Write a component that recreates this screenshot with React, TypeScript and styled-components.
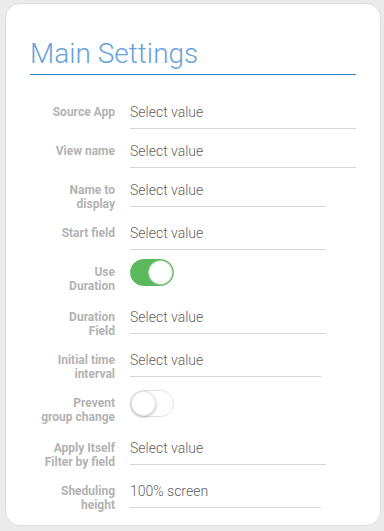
import React from "react";
import styled, { createGlobalStyle } from "styled-components";

const Global = createGlobalStyle`
  html, body {
    margin: 0;
    padding: 0;
    background: #ebebeb;
    font-family: Roboto, "Liberation Sans", sans-serif;
  }
`;

const Page = styled.div`
  padding: 3px 3px 4px 5px;
`;

const Card = styled.section`
  background: #ffffff;
  border: 1px solid #dedede;
  border-radius: 15px;
  padding: 34px 24px 13px 24px;
`;

const Title = styled.h1`
  margin: 0 0 27px;
  font-size: 28px;
  line-height: 32px;
  font-weight: 300;
  color: #67a3d9;
  padding-bottom: 4px;
  border-bottom: 1px solid #2f88c2;
`;

const Form = styled.div`
  display: flex;
  flex-direction: column;
`;

const Row = styled.div<{ $toggle?: boolean }>`
  display: flex;
  align-items: flex-start;
  gap: 15px;
  margin-top: ${(p) => (p.$toggle ? "9px" : "12px")};
  min-height: ${(p) => (p.$toggle ? "36px" : "0")};
  &:first-child {
    margin-top: 0;
  }
`;

const Label = styled.div<{ $toggle?: boolean }>`
  flex: 0 0 85px;
  text-align: right;
  font-size: 12px;
  line-height: 14px;
  font-weight: 700;
  color: #b3b3b3;
  white-space: nowrap;
  padding-top: ${(p) => (p.$toggle ? "6px" : "3px")};
`;

const Line = styled.span`
  display: block;
`;

const Field = styled.div<{ $width?: number }>`
  ${(p) => (p.$width ? `flex: 0 0 ${p.$width}px;` : "flex: 1 1 auto;")}
  font-size: 14px;
  line-height: 20px;
  font-weight: 300;
  color: #5f5f5f;
  padding-bottom: 6px;
  border-bottom: 1px solid #d7d7d7;
  white-space: nowrap;
`;

const Track = styled.div<{ $on?: boolean }>`
  box-sizing: border-box;
  width: 44px;
  height: 27px;
  border-radius: 14px;
  background: ${(p) => (p.$on ? "#5cb85c" : "#ffffff")};
  border: 1px solid ${(p) => (p.$on ? "#5cb85c" : "#e2e2e2")};
  display: flex;
  align-items: center;
  justify-content: ${(p) => (p.$on ? "flex-end" : "flex-start")};
`;

const Knob = styled.div<{ $on?: boolean }>`
  box-sizing: border-box;
  width: 25px;
  height: 25px;
  border-radius: 50%;
  background: #ffffff;
  border: 1px solid ${(p) => (p.$on ? "#9fd09f" : "#e6e6e6")};
  box-shadow: ${(p) => (p.$on ? "none" : "0 1px 3px rgba(0,0,0,0.28)")};
`;

type Item =
  | { label: string[]; value: string; width?: number }
  | { label: string[]; toggle: boolean };

const items: Item[] = [
  { label: ["Source App"], value: "Select value" },
  { label: ["View name"], value: "Select value" },
  { label: ["Name to", "display"], value: "Select value", width: 196 },
  { label: ["Start field"], value: "Select value", width: 196 },
  { label: ["Use", "Duration"], toggle: true },
  { label: ["Duration", "Field"], value: "Select value", width: 196 },
  { label: ["Initial time", "interval"], value: "Select value", width: 191 },
  { label: ["Prevent", "group change"], toggle: false },
  { label: ["Apply Itself", "Filter by field"], value: "Select value", width: 196 },
  { label: ["Sheduling", "height"], value: "100% screen", width: 191 },
];

function LabelText({ lines, toggle }: { lines: string[]; toggle?: boolean }) {
  return (
    <Label $toggle={toggle}>
      {lines.map((l) => (
        <Line key={l}>{l}</Line>
      ))}
    </Label>
  );
}

export default function App() {
  return (
    <Page>
      <Global />
      <Card>
        <Title>Main Settings</Title>
        <Form>
          {items.map((it) =>
            "toggle" in it ? (
              <Row key={it.label.join(" ")} $toggle>
                <LabelText lines={it.label} toggle />
                <Track $on={it.toggle}>
                  <Knob $on={it.toggle} />
                </Track>
              </Row>
            ) : (
              <Row key={it.label.join(" ")}>
                <LabelText lines={it.label} />
                <Field $width={it.width}>{it.value}</Field>
              </Row>
            )
          )}
        </Form>
      </Card>
    </Page>
  );
}
